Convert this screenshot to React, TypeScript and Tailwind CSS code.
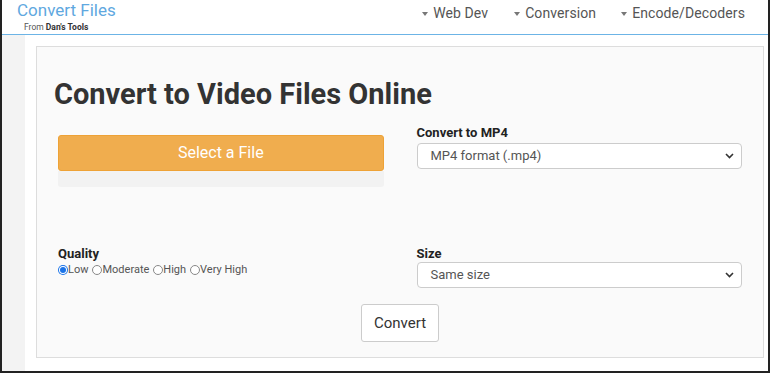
import React from "react";

const Caret = () => (
  <svg width="6" height="4" viewBox="0 0 6 4" className="mr-[5px] mt-[1px]">
    <path d="M0 0 L6 0 L3 4 Z" fill="#777" />
  </svg>
);

const Chevron = () => (
  <svg width="9" height="6" viewBox="0 0 9 6" className="absolute right-[7px] top-1/2 -translate-y-1/2">
    <path d="M1 1 L4.5 4.5 L8 1" fill="none" stroke="#333" strokeWidth="1.6" />
  </svg>
);

const Radio = ({ checked, label }: { checked?: boolean; label: string }) => (
  <span className="flex items-center">
    {checked ? (
      <span className="w-[10px] h-[10px] rounded-full bg-[#1a73e8] flex items-center justify-center">
        <span className="w-[6px] h-[6px] rounded-full bg-[#1a73e8] ring-1 ring-white" />
      </span>
    ) : (
      <span className="w-[10px] h-[10px] rounded-full border border-[#888] bg-white" />
    )}
    <span>{label}</span>
  </span>
);

function Select({ value }: { value: string }) {
  return (
    <div className="relative h-[26px] border border-[#ccc] rounded-[4px] bg-white flex items-center pl-[13px] text-[13px] text-[#555]">
      {value}
      <Chevron />
    </div>
  );
}

export default function App() {
  return (
    <div
      className="w-[770px] h-[373px] border-l-2 border-r-2 border-b-2 border-[#222] overflow-hidden bg-white flex flex-col"
      style={{ fontFamily: "Roboto, 'Liberation Sans', sans-serif" }}
    >
      <header className="h-[35px] shrink-0 border-b border-[#6cb4e6] flex items-start justify-between">
        <div className="pl-[15px] flex flex-col">
          <span className="text-[17px] leading-[20px] text-[#5fa8e0]">Convert Files</span>
          <span className="text-[8.5px] leading-[12px] text-[#555] pl-[7px] mt-[1px]">
            From <b className="text-[#333]">Dan's Tools</b>
          </span>
        </div>
        <nav className="flex items-center h-[27px] text-[14px] text-[#555] tracking-[0.1px] pr-[23px]">
          <span className="flex items-center">
            <Caret />
            Web Dev
          </span>
          <span className="flex items-center ml-[26px]">
            <Caret />
            Conversion
          </span>
          <span className="flex items-center ml-[25px]">
            <Caret />
            Encode/Decoders
          </span>
        </nav>
      </header>
      <div className="flex flex-1 min-h-0">
        <div className="w-[23px] bg-[#f3f3f3] shrink-0" />
        <div className="flex-1 pl-[11px] pt-[11px] pr-[4px] pb-[13px] flex">
          <div className="flex-1 border border-[#ddd] bg-[#fafafa] px-[21px] flex flex-col">
            <h1 className="text-[29px] leading-[36px] font-bold text-[#333] mt-[29px] ml-[-4px]">
              Convert to Video Files Online
            </h1>
            <div className="grid grid-cols-2 gap-x-[33px] mt-[13px]">
              <div className="flex flex-col pt-[10px]">
                <div className="h-[36px] bg-[#f0ad4e] border border-[#eea236] rounded-[3px] flex items-center justify-center text-white text-[16px]">
                  Select a File
                </div>
                <div className="h-[16px] bg-[#f2f2f2] rounded-b-[3px]" />
              </div>
              <div className="flex flex-col">
                <label className="text-[13px] leading-[15px] font-bold text-[#222] mb-[3px]">Convert to MP4</label>
                <Select value="MP4 format (.mp4)" />
              </div>
            </div>
            <div className="grid grid-cols-2 gap-x-[33px] mt-[59px]">
              <div className="flex flex-col">
                <label className="text-[13px] leading-[15px] font-bold text-[#222]">Quality</label>
                <div className="flex items-center text-[11px] leading-[16px] text-[#555] gap-[4px] mt-[1px]">
                  <Radio checked label="Low" />
                  <Radio label="Moderate" />
                  <Radio label="High" />
                  <Radio label="Very High" />
                </div>
              </div>
              <div className="flex flex-col">
                <label className="text-[13px] leading-[15px] font-bold text-[#222] mb-[1px]">Size</label>
                <Select value="Same size" />
              </div>
            </div>
            <div className="flex justify-center mt-[16px]">
              <div className="w-[78px] h-[38px] border border-[#ccc] rounded-[3px] bg-white flex items-center justify-center text-[15px] text-[#333]">
                Convert
              </div>
            </div>
          </div>
        </div>
      </div>
    </div>
  );
}
